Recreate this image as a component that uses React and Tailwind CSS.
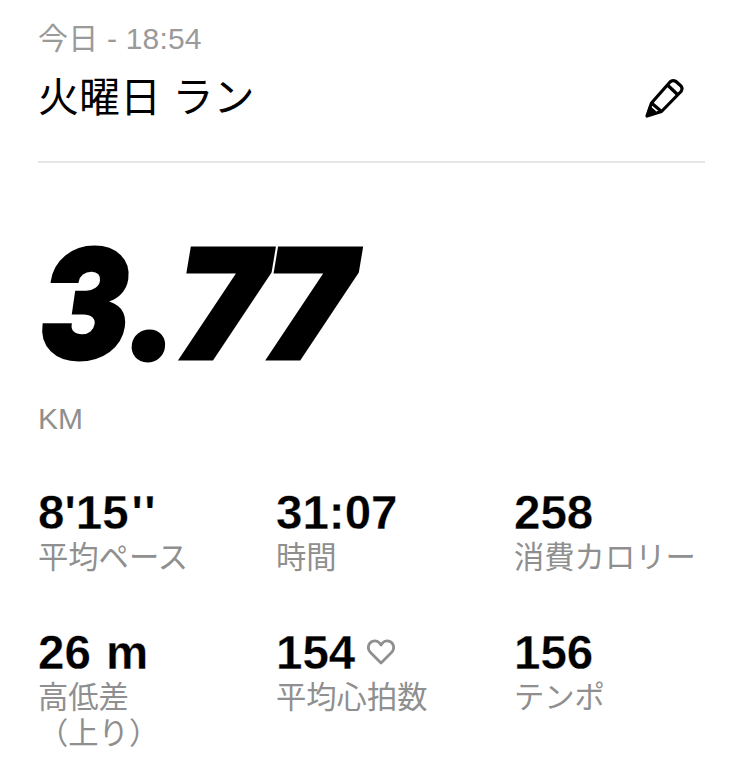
function Stat({ value, label, extra }) {
  return (
    <div className="flex flex-col">
      <div className="flex items-center h-[48px] text-[47.5px] leading-[48px] font-bold text-black [-webkit-text-stroke:0.3px_white]">
        <span>{value}</span>
        {extra}
      </div>
      <div className="mt-[3px] text-[30.3px] leading-[36px] text-[#8f8f8f] whitespace-pre-line">{label}</div>
    </div>
  );
}

export default function App() {
  return (
    <div className="w-[743px] h-[770px] overflow-hidden bg-white px-[38px] pt-[20px] font-['Liberation_Sans','Noto_Sans_CJK_JP',sans-serif]">
      <div className="text-[30px] leading-[38px] text-[#9a9a9a] tracking-[0.2px]">今日 - 18:54</div>
      <div className="mt-[13px] flex items-center justify-between h-[54px]">
        <div className="text-[41px] leading-[54px] text-black">火曜日 ラン</div>
        <svg viewBox="0 0 40 40" className="w-[40px] h-[40px] mr-[20px]" fill="none" stroke="black" strokeWidth="3.2" strokeLinejoin="round">
          <path d="M2 38 L6.5 25 L25 4 Q27.5 1.5 31 3.5 L36 8 Q38 10.5 36 13.5 L16.5 33.5 Z" />
          <path d="M6.5 25 L16.5 33.5" />
          <path d="M22.5 7 L33 17" />
          <path d="M3 37 L5 30 L9.5 34 Z" fill="black" />
        </svg>
      </div>
      <div className="mt-[36px] h-[2px] bg-[#e6e6e6]" />
      <div className="mt-[64px] ml-[2px] h-[154px] text-[152px] leading-[154px] font-['Inter',sans-serif] font-black italic text-black [-webkit-text-stroke:3px_black] tracking-[-6px]">
        <span className="inline-block origin-left scale-x-[0.88] mr-[-11px]">3</span>
        <span className="inline-block mr-[1px]">.</span>
        <span>77</span>
      </div>
      <div className="mt-[20px] text-[30px] leading-[36px] text-[#8f8f8f]">KM</div>
      <div className="mt-[52px] grid grid-cols-[238px_238px_191px]">
        <Stat value={<>8'15<span className="ml-[3px] tracking-[1.5px]">''</span></>} label="平均ペース" />
        <Stat value="31:07" label="時間" />
        <Stat value="258" label="消費カロリー" />
      </div>
      <div className="mt-[53px] grid grid-cols-[238px_238px_191px]">
        <Stat value={<span className="[word-spacing:2px]">26 m</span>} label={"高低差\n（上り）"} />
        <Stat
          value="154"
          label="平均心拍数"
          extra={
            <svg viewBox="0 0 28 26" className="ml-[12px] w-[28px] h-[26px] -mt-[2px]" fill="none" stroke="#8f8f8f" strokeWidth="2.8" strokeLinejoin="round">
              <path d="M14 24 L3.5 13.5 C0 10 1 4.5 5 2.5 C8.5 1 12 2.5 14 6 C16 2.5 19.5 1 23 2.5 C27 4.5 28 10 24.5 13.5 Z" />
            </svg>
          }
        />
        <Stat value="156" label="テンポ" />
      </div>
    </div>
  );
}
